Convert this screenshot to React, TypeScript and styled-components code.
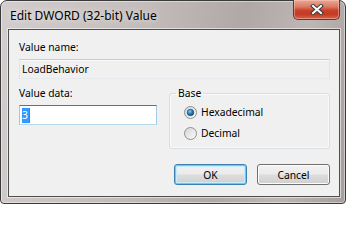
import React from 'react';
import styled, { createGlobalStyle, css } from 'styled-components';

const GlobalStyle = createGlobalStyle`
  html, body {
    margin: 0;
    padding: 0;
    width: 348px;
    height: 204px;
    overflow: hidden;
    background: #ffffff;
  }
  body {
    font-family: "Noto Sans", "Open Sans", sans-serif;
    font-size: 10.3px;
    color: #000000;
  }
`;

export default function App() {
  return (
    <>
      <GlobalStyle />
      <Window>
        <TitleBar>
          <Title>Edit DWORD (32-bit) Value</Title>
          <CloseButton aria-label="Close">
            <svg width="14" height="11" viewBox="0 0 14 11">
              <path d="M3 2 L11 9 M11 2 L3 9" stroke="#3b3b3b" strokeWidth="4" strokeLinecap="square" fill="none" />
              <path d="M3 2 L11 9 M11 2 L3 9" stroke="#ffffff" strokeWidth="2" strokeLinecap="square" fill="none" />
            </svg>
          </CloseButton>
        </TitleBar>

        <Client>
          <Label>Value name:</Label>
          <TextField $readOnly>LoadBehavior</TextField>

          <DataRow>
            <DataColumn>
              <Label>Value data:</Label>
              <TextField $focused>
                <Selection>3</Selection>
                <Caret />
              </TextField>
            </DataColumn>

            <GroupBox>
              <Legend>Base</Legend>
              <RadioList>
                <RadioRow>
                  <RadioIcon checked />
                  Hexadecimal
                </RadioRow>
                <RadioRow>
                  <RadioIcon />
                  Decimal
                </RadioRow>
              </RadioList>
            </GroupBox>
          </DataRow>

          <ButtonRow>
            <PushButton $default>OK</PushButton>
            <PushButton>Cancel</PushButton>
          </ButtonRow>
        </Client>
      </Window>
    </>
  );
}

const RadioIcon = ({ checked }: { checked?: boolean }) => (
  <svg width="13" height="13" viewBox="0 0 13 13">
    <defs>
      <linearGradient id={checked ? 'ringOn' : 'ringOff'} x1="0" y1="0" x2="1" y2="1">
        <stop offset="0" stopColor="#d4d4d4" />
        <stop offset="1" stopColor="#fbfbfb" />
      </linearGradient>
      <radialGradient id="dot" cx="0.4" cy="0.35" r="0.7">
        <stop offset="0" stopColor="#8fd4f8" />
        <stop offset="0.45" stopColor="#2a86c4" />
        <stop offset="1" stopColor="#103f66" />
      </radialGradient>
    </defs>
    <circle cx="6.5" cy="6.5" r="6" fill={`url(#${checked ? 'ringOn' : 'ringOff'})`} stroke="#8e8f8f" strokeWidth="1" />
    {checked && <circle cx="6.5" cy="6.5" r="3.3" fill="url(#dot)" stroke="#1b4a72" strokeWidth="0.6" />}
  </svg>
);

const Window = styled.div`
  box-sizing: border-box;
  width: 346px;
  height: 204px;
  display: flex;
  flex-direction: column;
  padding: 0 5px 6px 7px;
  border: 1px solid #3a3a3a;
  border-radius: 7px 7px 4px 4px;
  background: linear-gradient(100deg, #d2cecd 0%, #c2bbb9 40%, #b0a8a6 65%, #bdb6b4 82%, #a69e9c 100%);
  box-shadow: inset 0 0 0 1px rgba(255, 255, 255, 0.45);
`;

const TitleBar = styled.div`
  height: 28px;
  display: flex;
  align-items: center;
  justify-content: space-between;
`;

const Title = styled.span`
  padding-left: 2px;
  font-size: 12px;
  color: #000000;
  text-shadow: 0 0 6px rgba(255, 255, 255, 0.9);
`;

const CloseButton = styled.div`
  align-self: flex-start;
  box-sizing: border-box;
  width: 47px;
  height: 20px;
  margin-top: -1px;
  display: flex;
  align-items: center;
  justify-content: center;
  border: 1px solid #5b3a34;
  border-top: none;
  border-radius: 0 0 5px 5px;
  background: linear-gradient(180deg, #e9a898 0%, #dc7b64 35%, #c8412a 55%, #c43a22 75%, #d6654b 100%);
  box-shadow: inset 0 0 0 1px rgba(255, 210, 195, 0.45);
`;

const Client = styled.div`
  flex: 1;
  display: flex;
  flex-direction: column;
  padding: 10px 9px 0 10px;
  border: 1px solid #4e4e4e;
  background: #f0f0f0;
  box-shadow: 0 0 0 1px rgba(255, 255, 255, 0.55);
`;

const Label = styled.div`
  line-height: 15px;
  height: 15px;
`;

const TextField = styled.div<{ $readOnly?: boolean; $focused?: boolean }>`
  box-sizing: border-box;
  height: 20px;
  margin-top: 4px;
  display: flex;
  align-items: center;
  padding-left: 2px;
  border: 1px solid;
  ${({ $readOnly }) =>
    $readOnly &&
    css`
      background: #f0f0f0;
      border-color: #c9cacf #e2e5ea #e6e9ee #e2e5ea;
      box-shadow: inset 0 1px 0 #fbfbfb;
    `}
  ${({ $focused }) =>
    $focused &&
    css`
      background: #ffffff;
      border-color: #3d7bad #a4c9e3 #b7d9ed #a4c9e3;
    `}
`;

const Selection = styled.span`
  display: inline-block;
  height: 15px;
  line-height: 15px;
  padding: 0 1px 0 0;
  background: #3399ff;
  color: #ffffff;
`;

const Caret = styled.span`
  display: inline-block;
  width: 1px;
  height: 15px;
  background: #c8650c;
`;

const DataRow = styled.div`
  display: grid;
  grid-template-columns: 138px 161px;
  justify-content: space-between;
  margin-top: 7px;
`;

const DataColumn = styled.div`
  display: flex;
  flex-direction: column;
`;

const GroupBox = styled.fieldset`
  box-sizing: border-box;
  height: 62px;
  margin: 1px 0 0 0;
  padding: 0 0 0 6px;
  min-width: 0;
  border: 1px solid #d5dfe5;
  border-radius: 3px;
  box-shadow: inset 0 0 0 1px rgba(255, 255, 255, 0.6);
`;

const Legend = styled.legend`
  padding: 0 2px;
  line-height: 13px;
`;

const RadioList = styled.div`
  display: grid;
  gap: 6px;
  padding: 5px 0 0 8px;
`;

const RadioRow = styled.div`
  display: flex;
  align-items: center;
  gap: 4px;
  height: 15px;
  line-height: 15px;
`;

const ButtonRow = styled.div`
  display: flex;
  justify-content: flex-end;
  gap: 10px;
  margin-top: 15px;
  padding-right: 0;
`;

const PushButton = styled.div<{ $default?: boolean }>`
  box-sizing: border-box;
  width: 73px;
  height: 21px;
  display: flex;
  align-items: center;
  justify-content: center;
  border: 1px solid #707070;
  border-radius: 3px;
  background: linear-gradient(180deg, #f2f2f2 0%, #ebebeb 48%, #dddddd 52%, #cfcfcf 100%);
  box-shadow: inset 0 0 0 1px #fcfcfc;
  ${({ $default }) =>
    $default &&
    css`
      border-color: #3c7fb1;
      box-shadow: inset 0 0 0 1px #5fd0f8, inset 0 0 0 2px #c4ecfc;
    `}
`;
